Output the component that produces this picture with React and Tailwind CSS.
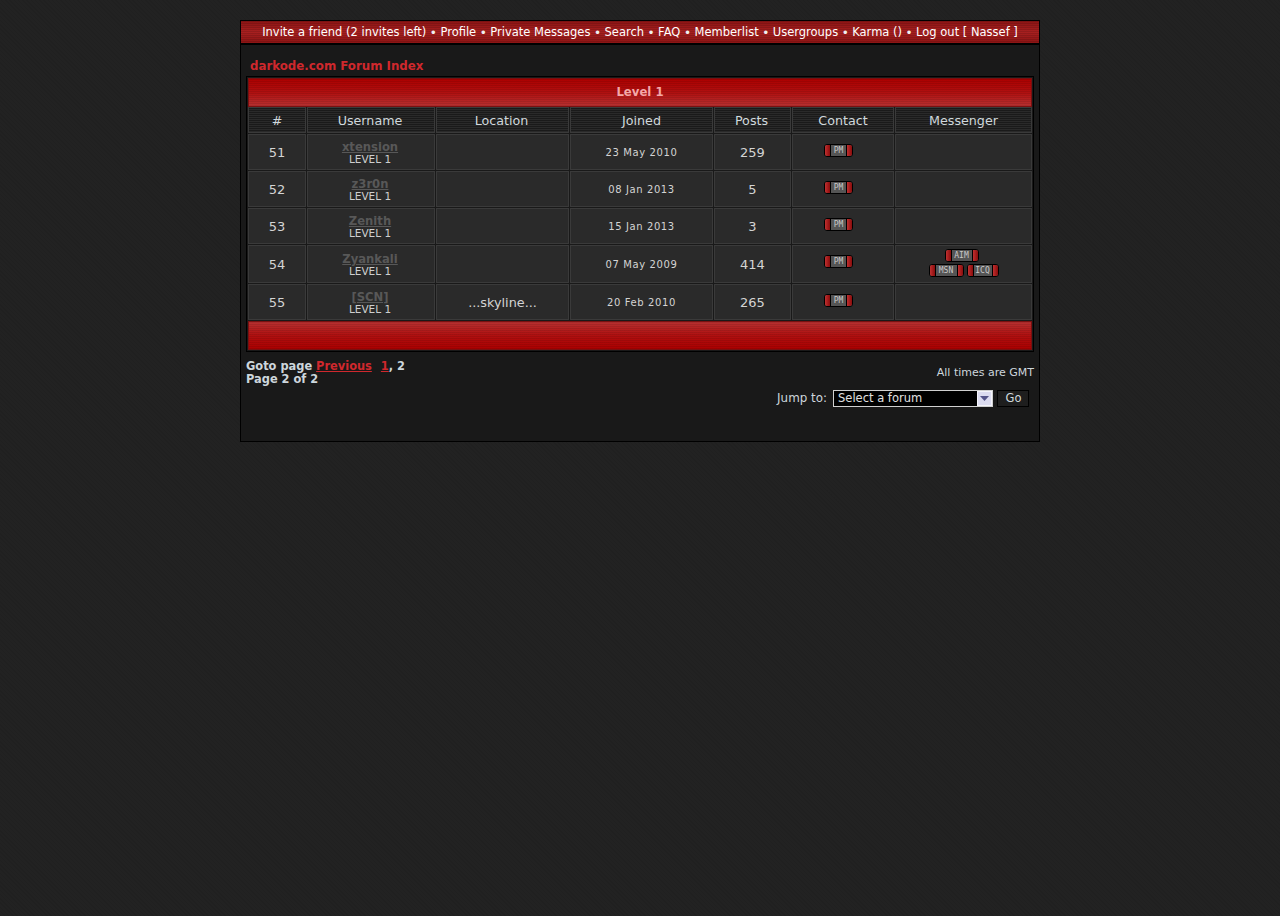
import React from 'react';

const members = [
  { rank: 51, name: 'xtension', location: '', joined: '23 May 2010', posts: 259, im: [] },
  { rank: 52, name: 'z3r0n', location: '', joined: '08 Jan 2013', posts: 5, im: [] },
  { rank: 53, name: 'Zenith', location: '', joined: '15 Jan 2013', posts: 3, im: [] },
  { rank: 54, name: 'Zyankali', location: '', joined: '07 May 2009', posts: 414, im: ['AIM', 'MSN', 'ICQ'] },
  { rank: 55, name: '[SCN]', location: '...skyline...', joined: '20 Feb 2010', posts: 265, im: [] },
];

const navLinks = ['Invite a friend (2 invites left)', 'Profile', 'Private Messages', 'Search', 'FAQ', 'Memberlist', 'Usergroups', 'Karma ()', 'Log out [ Nassef ]'];
const headers = [
  { label: '#', pad: '' },
  { label: 'Username', pad: 'pr-[2px]' },
  { label: 'Location', pad: 'pr-[2px]' },
  { label: 'Joined', pad: '' },
  { label: 'Posts', pad: 'pr-[2px]' },
  { label: 'Contact', pad: '' },
  { label: 'Messenger', pad: '' },
];

const cell = 'flex flex-col items-center border border-[#3a3a3a] bg-[#2a2a2a] text-[#d4d4d4]';
const redBar = 'bg-[repeating-linear-gradient(180deg,#00000018_0px,#00000018_1px,transparent_1px,transparent_2px),linear-gradient(180deg,#ac0000_0%,#b01010_50%,#b83030_100%)]';
const redBarFlip = 'bg-[repeating-linear-gradient(180deg,#00000018_0px,#00000018_1px,transparent_1px,transparent_2px),linear-gradient(180deg,#b83030_0%,#b01010_50%,#ac0000_100%)]';

const Pill = ({ label, width }) => (
  <span className={`flex h-[13px] items-stretch overflow-hidden rounded-[3px] border border-black bg-[#555] ${width}`}>
    <span className="w-[5px] border-r border-black box-content bg-[linear-gradient(90deg,#c03030,#8a0c0c)]" />
    <span className="flex-1 text-center font-['DejaVu_Sans_Mono',monospace] text-[8px] leading-[11px] text-[#c8c8c8]">{label}</span>
    <span className="w-[5px] border-l border-black box-content bg-[linear-gradient(90deg,#c03030,#8a0c0c)]" />
  </span>
);

const Row = ({ m }) => (
  <>
    <div className={`${cell} justify-center pt-[2px] text-[13px]`}>{m.rank}</div>
    <div className={`${cell} justify-center pr-[2px] pt-[1px]`}>
      <span className="text-[11.6px] font-bold leading-[14px] text-[#585858] underline">{m.name}</span>
      <span className="text-[10.5px] leading-[11px] text-[#cfcfcf]">LEVEL 1</span>
    </div>
    <div className={`${cell} justify-center pt-[2px] text-[12.8px]`}>{m.location}</div>
    <div className={`${cell} justify-center text-[10px] tracking-[0.6px]`}>{m.joined}</div>
    <div className={`${cell} justify-center pt-[2px] text-[13px]`}>{m.posts}</div>
    <div className={`${cell} pt-[9px] pr-[9px]`}>
      <Pill label="PM" width="w-[29px]" />
    </div>
    <div className={`${cell} pt-[3px]`}>
      {m.im.length > 0 && (
        <>
          <Pill label="AIM" width="w-[34px] -ml-[4px]" />
          <div className="mt-[2px] flex gap-[3px]">
            <Pill label="MSN" width="w-[35px]" />
            <Pill label="ICQ" width="w-[32px]" />
          </div>
        </>
      )}
    </div>
  </>
);

export default function App() {
  return (
    <div className="min-h-[916px] bg-[#212121] bg-[repeating-linear-gradient(45deg,#202020_0px,#202020_1px,#222222_1px,#222222_3px)] pt-5 font-['DejaVu_Sans',Verdana,sans-serif]">
      <div className="mx-auto h-[422px] w-[800px] border border-black bg-[#191919]">
        <div className="flex h-[24px] items-center justify-center gap-[3.5px] border-b-2 border-black bg-[repeating-linear-gradient(180deg,#00000020_0px,#00000020_1px,transparent_1px,transparent_2px),linear-gradient(180deg,#8c1414,#a82020_50%,#8c1414)] pt-[1px] text-[11.5px] text-white">
          {navLinks.map((label, i) => (
            <React.Fragment key={label}>
              {i > 0 && <span className="text-[12px] text-[#f0f0f0]">•</span>}
              <span>{label}</span>
            </React.Fragment>
          ))}
        </div>

        <div className="px-[5px]">
          <div className="mb-[2px] pl-[4px] pt-[13px] text-[11.8px] font-bold leading-[16px] text-[#d0282d]">darkode.com Forum Index</div>

          <div className="border border-black p-px">
            <div className={`flex h-[29px] items-center justify-center border border-[#7a1010] ${redBar} text-[11.7px] font-bold text-[#f4a8a8]`}>
              Level 1
            </div>
            <div className="grid grid-cols-[58px_128px_133px_143px_77px_102px_137px] grid-rows-[26px_36px_36px_36px_38px_36px] gap-px">
              {headers.map((h) => (
                <div key={h.label} className={`flex items-center justify-center border border-[#3a3a3a] bg-[repeating-linear-gradient(180deg,#1a1a1a_0px,#1a1a1a_1px,#2a2a2a_1px,#2a2a2a_2px)] pt-[2px] text-[12.7px] text-[#d0d8dc] ${h.pad}`}>
                  {h.label}
                </div>
              ))}
              {members.map((m) => (
                <Row key={m.rank} m={m} />
              ))}
            </div>
            <div className={`mt-px h-[29px] border border-[#7a1010] ${redBarFlip}`} />
          </div>

          <div className="mt-[8px] flex justify-between">
            <div className="text-[11.4px] font-bold leading-[13px] text-[#cdd6dc]">
              <div>
                Goto page <span className="text-[#d0282d] underline">Previous</span>
                <span className="ml-[9px] text-[#d0282d] underline">1</span>, 2
              </div>
              <div>Page 2 of 2</div>
            </div>
            <div className="flex flex-col items-end">
              <div className="pt-[6px] text-[11px] leading-[13px] text-[#cdd6dc]">All times are GMT</div>
              <div className="mt-[10px] mr-[5px] flex items-center text-[11.9px] text-[#cdd6dc]">
                <span className="mr-[6px] pt-px">Jump to:</span>
                <div className="flex h-[17px] w-[160px] items-center border border-[#d0d0d0] bg-black pl-[4px] text-[11.5px] text-[#e0e0e0]">
                  <span className="flex-1 pt-px leading-none">Select a forum</span>
                  <span className="flex h-full w-[15px] items-center justify-center border border-[#f4f4fb] bg-[#dcdcf0]">
                    <svg width="9" height="5" viewBox="0 0 9 5">
                      <path d="M0 0h9L4.5 5z" fill="#55558a" />
                    </svg>
                  </span>
                </div>
                <div className="ml-[4px] flex h-[17px] w-[32px] items-center justify-center border border-black bg-[#1e1e1e] pl-px pt-px text-[11.5px] text-[#d0d8dc]">Go</div>
              </div>
            </div>
          </div>
        </div>
      </div>
    </div>
  );
}
